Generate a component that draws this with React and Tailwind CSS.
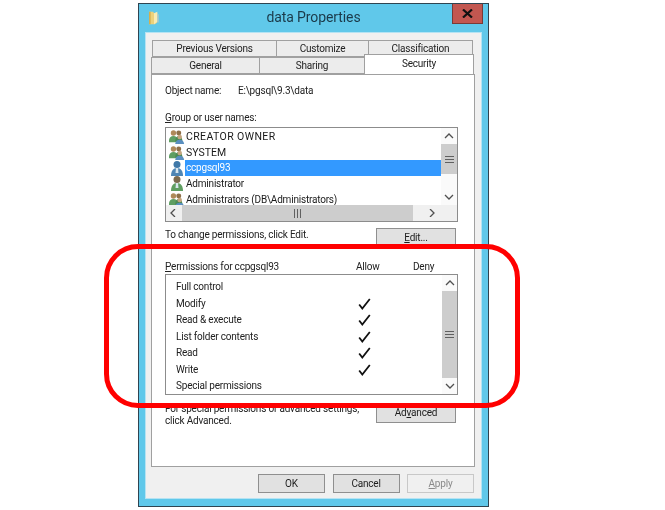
import React from "react"

const font = { fontFamily: 'Roboto, "Liberation Sans", sans-serif' }

function Tab({ label, className }) {
  return (
    <div className={"flex items-center justify-center border border-[#a0a0a0] bg-[#ececec] text-[10px] tracking-[-0.2px] text-[#222] " + className}>
      {label}
    </div>
  )
}

function FolderIcon() {
  return (
    <svg width="12" height="15" viewBox="0 0 14 18">
      <path d="M1 2h5l1 2h4v11l-3 2H1z" fill="#ecd27c" />
      <path d="M7 4l4-2v12l-4 3z" fill="#f9ecb4" />
      <path d="M1 2h2v15H1z" fill="#d2b052" />
      <path d="M11 5h2v10h-2z" fill="#b5c4c4" opacity="0.7" />
    </svg>
  )
}

function GroupIcon() {
  return (
    <svg width="18" height="16" viewBox="0 0 18 16">
      <circle cx="5" cy="3.5" r="3" fill="#b08a5a" />
      <path d="M0 12c0-3 2-5 5-5s5 2 5 5v2H0z" fill="#5f9e62" />
      <circle cx="11" cy="3.5" r="2.8" fill="#8f7048" />
      <path d="M7 12c0-3 2-5 4-5s4 2 4 5v1H7z" fill="#4c8a54" />
      <circle cx="12" cy="8" r="2.6" fill="#c5a57e" />
      <path d="M7 16c0-3 2-5 5-5s5 2 5 5z" fill="#5a8fc0" />
    </svg>
  )
}

function UserIcon({ body, head }) {
  return (
    <svg width="14" height="17" viewBox="0 0 14 17">
      <circle cx="7" cy="4.5" r="3.5" fill={head} />
      <path d="M1 16c0-5 2-8 6-8s6 3 6 8z" fill={body} />
      <path d="M6 8h2l.5 5H5.5z" fill="#d8e6ee" />
    </svg>
  )
}

function Chevron({ dir }) {
  const paths = {
    up: "M1 6l4-4 4 4",
    down: "M1 2l4 4 4-4",
    left: "M6 0L2 4l4 4",
    right: "M2 0l4 4-4 4",
  }
  return (
    <svg width="10" height="8" viewBox="0 0 10 8" fill="none" stroke="#505050" strokeWidth="1.3">
      <path d={paths[dir]} />
    </svg>
  )
}

function Grip({ vertical }) {
  return (
    <div className={vertical ? "flex flex-col gap-[1px]" : "flex gap-[1px]"}>
      {[0, 1, 2].map(i => (
        <div key={i} className={vertical ? "w-[9px] h-[1px] my-[0.5px] bg-[#606060]" : "w-[1px] h-[9px] mx-[0.5px] bg-[#606060]"} />
      ))}
    </div>
  )
}

function Check() {
  return (
    <svg width="13" height="12" viewBox="0 0 13 12" fill="none" stroke="#111" strokeWidth="1.8">
      <path d="M1.2 6.5L4.3 10.5L11.8 1" />
    </svg>
  )
}

function DialogButton({ children, className }) {
  return (
    <div className={"flex items-center justify-center border border-[#8f8f8f] bg-[#e1e1e1] text-[10px] tracking-[-0.2px] text-[#1c1c1c] " + className}>
      {children}
    </div>
  )
}

const users = [
  { name: "CREATOR OWNER", icon: <GroupIcon />, caps: "text-[10.5px] tracking-[0.4px]" },
  { name: "SYSTEM", icon: <GroupIcon />, caps: "text-[10.5px] tracking-normal" },
  { name: "ccpgsql93", icon: <UserIcon body="#4f86b5" head="#3f78a8" />, selected: true },
  { name: "Administrator", icon: <UserIcon body="#5f9e62" head="#7c6a4e" /> },
  { name: "Administrators (DB\\Administrators)", icon: <GroupIcon /> },
]

const perms = [
  { name: "Full control" },
  { name: "Modify", allow: true },
  { name: "Read & execute", allow: true },
  { name: "List folder contents", allow: true },
  { name: "Read", allow: true },
  { name: "Write", allow: true },
  { name: "Special permissions" },
]

export default function App() {
  return (
    <div className="relative w-[665px] h-[510px] overflow-hidden bg-white pt-[3px] pl-[138px] blur-[0.3px]" style={font}>
      <div className="flex flex-col w-[351px] h-[504px] border border-[#2f4450] bg-[#60c8ea]">
        {/* title bar */}
        <div className="flex h-[28px] shrink-0">
          <div className="w-[9px]" />
          <div className="pt-[6px]"><FolderIcon /></div>
          <div className="flex-1 pt-[3px] pl-[15px] text-center text-[14px] tracking-[-0.1px] text-[#1b3a4a]">data Properties</div>
          <div className="flex items-center justify-center w-[31px] h-[20px] mr-[5px] border border-[#7a3a36] border-t-0 bg-[#c25750]">
            <svg width="11" height="9" viewBox="0 0 11 9" stroke="#111" strokeWidth="2.2">
              <path d="M1 .5L10 8.5M10 .5L1 8.5" />
            </svg>
          </div>
        </div>

        {/* dialog body */}
        <div className="w-[337px] h-[467px] ml-[6px] border border-[#b5e3f3] bg-[#f0f0f0] pt-[7px] pl-[5px]">
          {/* tabs */}
          <div className="flex ml-[1px] h-[17px]">
            <Tab label="Previous Versions" className="w-[125px]" />
            <Tab label="Customize" className="w-[93px] -ml-[1px]" />
            <Tab label="Classification" className="w-[105px] -ml-[1px]" />
          </div>
          <div className="flex h-[17px]">
            <Tab label="General" className="w-[109px]" />
            <Tab label="Sharing" className="w-[106px] -ml-[1px]" />
            <div className="relative z-10 flex justify-center w-[110px] h-[20px] -mt-[3px] -ml-[1px] pt-[1px] border border-b-0 border-[#a0a0a0] bg-white text-[10px] tracking-[-0.2px] text-[#222]">Security</div>
          </div>

          {/* security panel */}
          <div className="w-[324px] h-[393px] border border-[#a0a0a0] bg-white pt-[9px] px-[13px] text-[10px] tracking-[-0.2px] leading-[14px] text-[#222]">
            <div className="flex">
              <span className="w-[73px]">Object name:</span>
              <span>E:\pgsql\9.3\data</span>
            </div>
            <div className="mt-[13px]"><span className="underline">G</span>roup or user names:</div>

            <div className="flex flex-col w-[293px] h-[95px] mt-[2px] border border-[#8c8c8c]">
              <div className="flex h-[77px]">
                <div className="flex-1 overflow-hidden pt-[1px] pl-[3px]">
                  {users.map(u => (
                    <div key={u.name} className="flex items-center h-[15.7px]">
                      <div className="flex justify-center w-[16px] shrink-0">{u.icon}</div>
                      <div className={u.selected ? "flex flex-1 items-center h-full pl-[1px] bg-[#3399ff] text-white" : "pl-[1px] text-[#1a1a1a] " + (u.caps || "")}>{u.name}</div>
                    </div>
                  ))}
                </div>
                <div className="flex flex-col w-[16px] bg-[#fafafa]">
                  <div className="flex items-center justify-center h-[16px]"><Chevron dir="up" /></div>
                  <div className="flex items-center justify-center h-[30px] bg-[#cdcdcd]"><Grip vertical /></div>
                  <div className="flex-1" />
                  <div className="flex items-center justify-center h-[16px]"><Chevron dir="down" /></div>
                </div>
              </div>
              <div className="flex h-[16px] bg-[#f0f0f0]">
                <div className="flex items-center justify-center w-[16px]"><Chevron dir="left" /></div>
                <div className="flex items-center justify-center w-[231px] bg-[#cdcdcd]"><Grip /></div>
                <div className="flex-1" />
                <div className="flex items-center justify-center w-[16px] mr-[16px]"><Chevron dir="right" /></div>
              </div>
            </div>

            <div className="flex justify-between h-[20px] mt-[6px] pr-[5px]">
              <span>To change permissions, click Edit.</span>
              <DialogButton className="w-[80px] h-[20px]"><span><span className="underline">E</span>dit...</span></DialogButton>
            </div>

            <div className="flex mt-[12px] h-[14px]">
              <span className="w-[191px]"><span className="underline">P</span>ermissions for ccpgsql93</span>
              <span className="w-[57px]">Allow</span>
              <span>Deny</span>
            </div>

            <div className="flex w-[293px] h-[121px] border border-[#8c8c8c]">
              <div className="flex-1 pl-[10px] pt-[4px]">
                {perms.map(p => (
                  <div key={p.name} className="flex items-center h-[16.5px]">
                    <span className="w-[182px]">{p.name}</span>
                    {p.allow && <Check />}
                  </div>
                ))}
              </div>
              <div className="flex flex-col w-[15px] bg-[#fafafa]">
                <div className="flex items-center justify-center h-[16px]"><Chevron dir="up" /></div>
                <div className="flex flex-1 items-center justify-center bg-[#cdcdcd]"><Grip vertical /></div>
                <div className="flex items-center justify-center h-[16px]"><Chevron dir="down" /></div>
              </div>
            </div>

            <div className="flex justify-between mt-[8px] pr-[5px]">
              <div className="whitespace-nowrap leading-[11.5px]">For special permissions or advanced settings,<br />click Advanced.</div>
              <DialogButton className="w-[80px] h-[20px]"><span>Ad<span className="underline">v</span>anced</span></DialogButton>
            </div>
          </div>

          {/* footer buttons */}
          <div className="flex gap-[7.5px] mt-[7px] ml-[107px]">
            <DialogButton className="w-[67px] h-[19px] border-[#5a9fc8]">OK</DialogButton>
            <DialogButton className="w-[67px] h-[19px]">Cancel</DialogButton>
            <DialogButton className="w-[67px] h-[19px] border-[#c8c8c8] bg-[#f0f0f0] text-[#8a8a8a]"><span><span className="underline">A</span>pply</span></DialogButton>
          </div>
        </div>
      </div>

      {/* red annotation */}
      <div className="absolute left-[104px] top-[244px] w-[416px] h-[164px] rounded-[34px] border-[5px] border-[#ff0000]" />
    </div>
  )
}
